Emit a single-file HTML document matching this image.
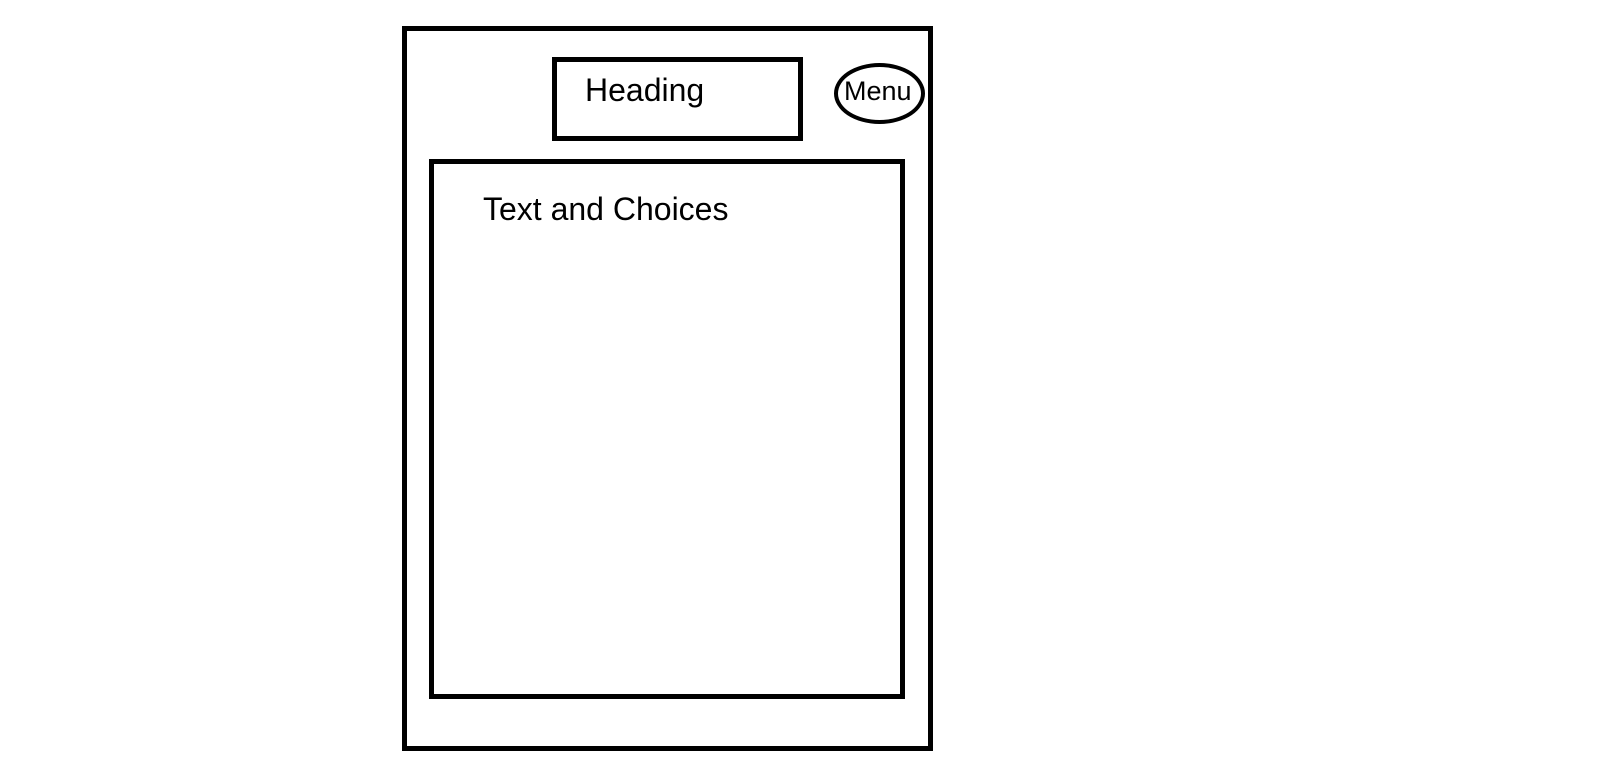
<!DOCTYPE html>
<html><head><meta charset="utf-8"><style>
html,body{margin:0;padding:0;background:#fff;width:1615px;height:783px;overflow:hidden;position:relative}
div{position:absolute;box-sizing:border-box}
.t{font-family:"Liberation Sans",sans-serif;line-height:1;color:#000;white-space:nowrap}
</style></head><body>
<div style="left:402px;top:26px;width:531px;height:725px;border:5px solid #000"></div>
<div style="left:552px;top:57px;width:251px;height:84px;border:5px solid #000"></div>
<div class="t" style="left:585px;top:74px;font-size:32px">Heading</div>
<div style="left:834px;top:63px;width:91px;height:61px;border:4px solid #000;border-radius:50%"></div>
<div class="t" style="left:844px;top:78px;font-size:27px">Menu</div>
<div style="left:429px;top:159px;width:476px;height:540px;border:5px solid #000"></div>
<div class="t" style="left:483px;top:193px;font-size:32px">Text and Choices</div>
</body></html>
